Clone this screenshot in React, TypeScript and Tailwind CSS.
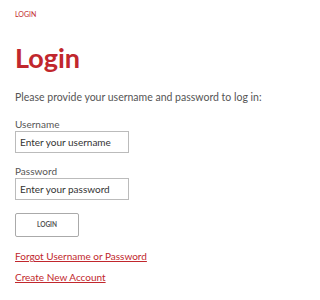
export default function App() {
  return (
    <div className="min-h-[300px] bg-white px-[15px] pt-[10px] font-['Lato',sans-serif] text-[#555]">
      <div className="text-[7px] leading-[9px] uppercase text-[#c1272d]">Login</div>

      <h1 className="mt-[24px] text-[27px] leading-[30px] font-bold text-[#c1272d]">Login</h1>

      <p className="mt-[17px] text-[10.5px] leading-[14px] whitespace-nowrap">
        Please provide your username and password to log in:
      </p>

      <form className="mt-[14px] flex flex-col" onSubmit={(e) => e.preventDefault()}>
        <label className="text-[10px] leading-[12px]">Username</label>
        <input
          type="text"
          placeholder="Enter your username"
          className="mt-[1px] h-[22px] w-[114px] border border-[#bbb] px-[4px] text-[10px] text-[#333] placeholder:text-[#333] outline-none"
        />

        <label className="mt-[12px] text-[10px] leading-[12px]">Password</label>
        <input
          type="password"
          placeholder="Enter your password"
          className="mt-[1px] h-[22px] w-[114px] border border-[#bbb] px-[4px] text-[10px] text-[#333] placeholder:text-[#333] outline-none"
        />

        <button
          type="submit"
          className="mt-[13px] h-[24px] w-[64px] rounded-[2px] border border-[#aaa] bg-white text-[6.5px] font-bold uppercase text-[#555]"
        >
          Login
        </button>
      </form>

      <div className="mt-[13px] flex flex-col gap-[9px] text-[10px] leading-[12px] text-[#c1272d]">
        <a href="#" className="underline w-fit">Forgot Username or Password</a>
        <a href="#" className="underline w-fit">Create New Account</a>
      </div>
    </div>
  )
}
